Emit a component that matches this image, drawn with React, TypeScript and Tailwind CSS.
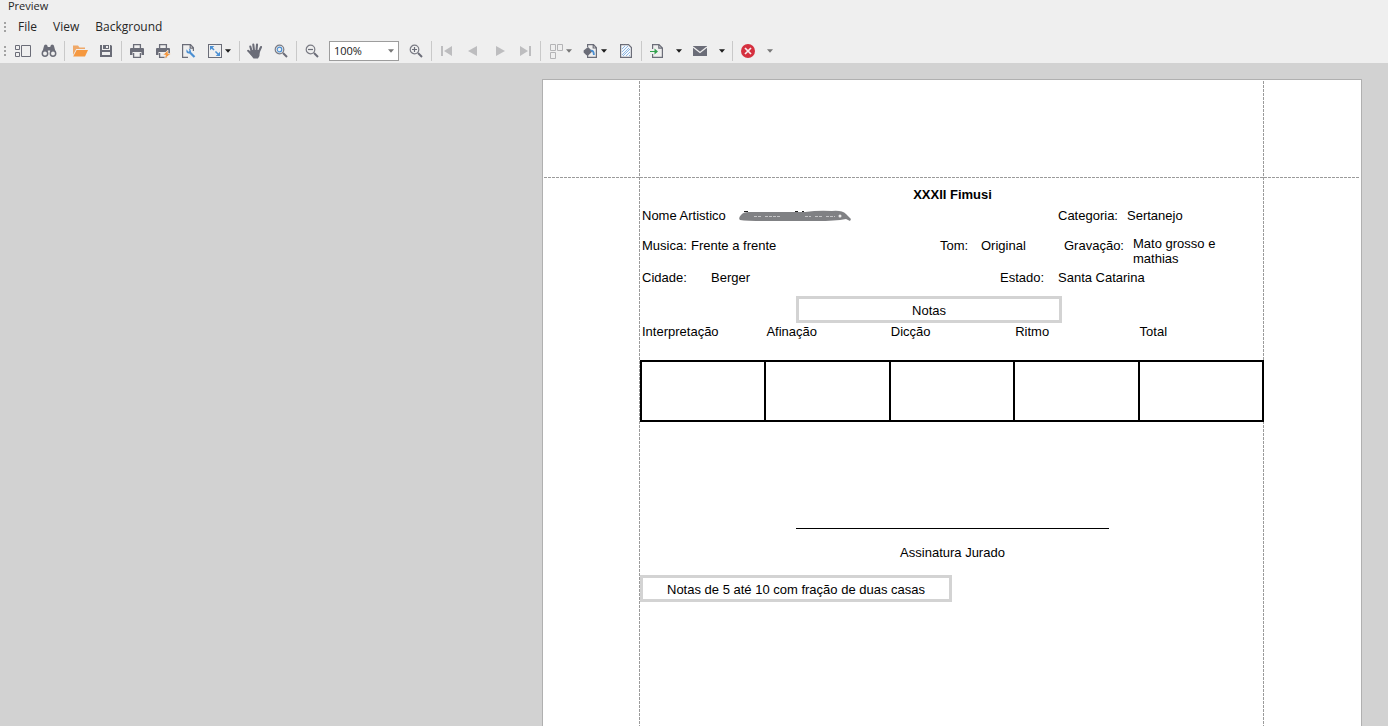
import type { ReactNode } from "react";

const GREY = "#6b6d78";
const BLUE = "#4a8fd3";
const ORANGE = "#f5983f";
const PALE = "#bdbdbf";

function Icon({ children }: { children: ReactNode }) {
  return (
    <svg width="16" height="16" viewBox="0 0 16 16" fill="none" aria-hidden="true" className="shrink-0">
      {children}
    </svg>
  );
}

function Arrow({ color = "#1c1c1c" }: { color?: string }) {
  return (
    <svg width="6" height="4" viewBox="0 0 6 4" aria-hidden="true" className="shrink-0">
      <path d="M0 0.3H6L3 3.7Z" fill={color} />
    </svg>
  );
}

function ToolButton({ label, children }: { label: string; children: ReactNode }) {
  return (
    <button type="button" aria-label={label} className="flex h-6 w-[26px] shrink-0 items-center justify-center">
      {children}
    </button>
  );
}

function MenuButton({ label, color, children }: { label: string; color?: string; children: ReactNode }) {
  return (
    <button type="button" aria-label={label} className="flex h-6 w-[35px] shrink-0 items-center gap-[2px] pl-[5px]">
      {children}
      <Arrow color={color} />
    </button>
  );
}

function ArrowButton({ label, color }: { label: string; color?: string }) {
  return (
    <button type="button" aria-label={label} className="flex h-6 w-[17px] shrink-0 items-center justify-center">
      <Arrow color={color} />
    </button>
  );
}

function Separator() {
  return <div className="mx-[2px] h-5 w-px shrink-0 bg-[#c9c9c9]" />;
}

function Grip() {
  return (
    <div className="flex w-[10px] shrink-0 flex-col gap-[2px] pl-1">
      <i className="size-[2px] bg-[#a3a3a3]" />
      <i className="size-[2px] bg-[#a3a3a3]" />
      <i className="size-[2px] bg-[#a3a3a3]" />
    </div>
  );
}

function Magnifier({ children }: { children?: ReactNode }) {
  return (
    <Icon>
      <circle cx="6.5" cy="6.5" r="4.3" stroke="#7a7b84" strokeWidth="1.2" />
      <path d="M10 10L14 14" stroke={GREY} strokeWidth="2" />
      {children}
    </Icon>
  );
}

function Printer() {
  return (
    <>
      <path d="M4.6 5V1.7H11.4V5" stroke={GREY} strokeWidth="1.3" />
      <path d="M1 6Q1 5 2 5H14Q15 5 15 6V12H12.5V9H3.5V12H1Z" fill={GREY} />
      <path d="M4.6 10V14.3H11.4V10" stroke={GREY} strokeWidth="1.3" />
    </>
  );
}

function Toolbar() {
  return (
    <div role="toolbar" aria-label="Preview tools" className="flex h-6 items-center overflow-hidden">
      <Grip />
      <ToolButton label="Thumbnails">
        <Icon>
          <path d="M0.5 2.5H4.5V6.5H0.5ZM0.5 9.5H4.5V13.5H0.5ZM6.5 2.5H15.5V13.5H6.5Z" stroke={GREY} />
        </Icon>
      </ToolButton>
      <ToolButton label="Search">
        <Icon>
          <path d="M3 3Q3 1.5 5 1.5Q6.5 1.5 6.8 4H9.2Q9.5 1.5 11 1.5Q13 1.5 13 3L14.6 9H9.2V7.5H6.8V9H1.4Z" fill={GREY} />
          <circle cx="4" cy="10.5" r="2.7" fill="#efefef" stroke={GREY} strokeWidth="1.5" />
          <circle cx="12" cy="10.5" r="2.7" fill="#efefef" stroke={GREY} strokeWidth="1.5" />
        </Icon>
      </ToolButton>
      <Separator />
      <ToolButton label="Open">
        <Icon>
          <path d="M1 12V2.5H6L7.5 4.5H13V6H4.2Z" fill="#efa868" />
          <path d="M4.6 7H16L13 13.5H1.2Z" fill={ORANGE} />
        </Icon>
      </ToolButton>
      <ToolButton label="Save">
        <Icon>
          <path fillRule="evenodd" d="M2 2H4V7H12V2H13L14 3V14H2ZM4 9V12H12V9Z" fill={GREY} />
          <path fillRule="evenodd" d="M5 2H11V6H5ZM8 3V5H10V3Z" fill={GREY} />
        </Icon>
      </ToolButton>
      <Separator />
      <ToolButton label="Print">
        <Icon>
          <Printer />
        </Icon>
      </ToolButton>
      <ToolButton label="Quick print">
        <Icon>
          <Printer />
          <path d="M13 7L7.8 12H10.5L9.5 16L16 10.6H13Z" fill={ORANGE} stroke="#efefef" strokeWidth="0.7" />
        </Icon>
      </ToolButton>
      <ToolButton label="Page setup">
        <Icon>
          <path d="M7 14.4H1.6V1.6H9.5L12.4 4.8V8M9.2 2V5.2H12" stroke={GREY} strokeWidth="1.2" />
          <path d="M8.5 9L13.5 14" stroke={BLUE} strokeWidth="2.2" />
          <path d="M5.6 6.2Q4.500 10.5 8.2 10.4L10 8.7Q10.2 6 7.8 5.6L8.5 7.9L7.3 8.8Z" fill={BLUE} />
        </Icon>
      </ToolButton>
      <MenuButton label="Scale">
        <Icon>
          <rect x="1.5" y="1.5" width="13" height="13" stroke={GREY} />
          <path d="M4.5 4.5L11.5 11.5" stroke={BLUE} strokeWidth="1.5" strokeDasharray="3.6 2" />
          <path d="M3 3H7.3L3 7.3ZM13 13H8.7L13 8.7Z" fill={BLUE} />
        </Icon>
      </MenuButton>
      <Separator />
      <ToolButton label="Hand tool">
        <Icon>
          <path
            d="M4.7 8.5L3.3 3.5M7 7.5L6.3 1.6M9.5 7.5L10 1.6M12 8.5L14 4M5 11.500L1.2 7.8"
            stroke={GREY}
            strokeWidth="2.1"
            strokeLinecap="round"
          />
          <path d="M3.8 7H12.9Q13.2 13 11 15.4H6.5L2.6 10.5Z" fill={GREY} />
        </Icon>
      </ToolButton>
      <ToolButton label="Magnifier">
        <Magnifier>
          <circle cx="6.5" cy="6.5" r="2.3" stroke={BLUE} strokeWidth="1.2" />
        </Magnifier>
      </ToolButton>
      <Separator />
      <ToolButton label="Zoom out">
        <Magnifier>
          <path d="M4 6.5H9" stroke={GREY} strokeWidth="1.2" />
        </Magnifier>
      </ToolButton>
      <div className="relative mx-1 shrink-0">
        <select
          aria-label="Zoom"
          defaultValue="100%"
          className="block h-5 w-[70px] appearance-none border border-[#9d9d9d] bg-white px-1 text-[11px] leading-4 text-[#1a1a1a]"
        >
          <option>50%</option>
          <option>100%</option>
          <option>200%</option>
        </select>
        <span className="pointer-events-none absolute inset-y-0 right-[5px] flex items-center">
          <Arrow color="#777777" />
        </span>
      </div>
      <ToolButton label="Zoom in">
        <Magnifier>
          <path d="M4 6.5H9M6.5 4V9" stroke={GREY} strokeWidth="1.2" />
        </Magnifier>
      </ToolButton>
      <Separator />
      <ToolButton label="First page">
        <Icon>
          <path d="M2 3H4V13H2ZM13 3V13L5 8Z" fill={PALE} />
        </Icon>
      </ToolButton>
      <ToolButton label="Previous page">
        <Icon>
          <path d="M12 3V13L3 8Z" fill={PALE} />
        </Icon>
      </ToolButton>
      <ToolButton label="Next page">
        <Icon>
          <path d="M5 3V13L14 8Z" fill={PALE} />
        </Icon>
      </ToolButton>
      <ToolButton label="Last page">
        <Icon>
          <path d="M12 3H14V13H12ZM3 3V13L11 8Z" fill={PALE} />
        </Icon>
      </ToolButton>
      <Separator />
      <MenuButton label="Multiple pages" color="#777777">
        <Icon>
          <path d="M2.5 1.5H7.5V7.5H2.5ZM9.5 1.5H14.5V7.500H9.5ZM2.5 9.5H7.5V15.5H2.5Z" stroke="#b4b4b6" />
        </Icon>
      </MenuButton>
      <MenuButton label="Page color">
        <Icon>
          <path d="M4.6 4V1.6H10.5L13.4 4.8V14.4H4.6V12M10.2 2V5H13" stroke={GREY} strokeWidth="1.2" />
          <path d="M5 4L9.4 8.2L5.5 12.3H3.4L0.6 9.5V7.5Z" fill={GREY} />
          <path d="M7 6.9Q11.8 6 11.8 12H10Q10 8.8 8.5 8.5Z" fill={BLUE} />
        </Icon>
      </MenuButton>
      <ToolButton label="Watermark">
        <Icon>
          <path d="M2.6 1.6H10.5L13.4 4.6V14.4H2.6Z" fill="#f4f7fb" stroke={GREY} strokeWidth="1.2" />
          <path
            d="M4 6L7 3M4 9L10 3M4 12L11 5M5 13L12 6M8 13L12 9M11 13L12 12"
            stroke="#8db8e4"
            strokeWidth="1"
          />
        </Icon>
      </ToolButton>
      <Separator />
      <ToolButton label="Export">
        <Icon>
          <path d="M3.6 6V1.6H10L13.4 5V14.4H3.6V11M9.8 2V5.2H13" stroke={GREY} strokeWidth="1.2" />
          <path d="M1 8H5.500V5.5L9 8.500L5.5 11.5V9H1Z" fill="#32a14d" />
        </Icon>
      </ToolButton>
      <ArrowButton label="Export options" />
      <ToolButton label="Send by e-mail">
        <Icon>
          <path d="M1 3H15V13H1Z" fill={GREY} />
          <path d="M1 4L8 9.4L15 4" stroke="#efefef" strokeWidth="1.3" />
        </Icon>
      </ToolButton>
      <ArrowButton label="E-mail options" />
      <Separator />
      <ToolButton label="Close">
        <Icon>
          <circle cx="8" cy="8" r="7" fill="#d5303f" />
          <path d="M5 5L11 11M11 5L5 11" stroke="#f7eff0" strokeWidth="1.7" />
        </Icon>
      </ToolButton>
      <ArrowButton label="More" color="#777777" />
    </div>
  );
}

function RedactedName() {
  return (
    <svg role="img" aria-label="Redacted" width="113" height="12" viewBox="0 0 113 12" className="shrink-0">
      <path d="M5 1.500H9M56 1.500H59M63 1.500H65" stroke="#222222" />
      <path
        d="M2 5Q4 2 10 2L66 2Q80 0 93 1Q103 0 107 4L112 9L111 11L107 9Q96 11 78 11L30 11Q8 11 1 10Q-1 8 2 5Z"
        fill="#808184"
      />
      <path d="M15 6.500H23M26 6.500H42M66 6.500H72M76 6.500H84M87 6.500H96" stroke="#c4c4c6" strokeDasharray="3 1" />
      <circle cx="101" cy="6" r="1.500" fill="#ececec" />
    </svg>
  );
}

const criteria = ["Interpretação", "Afinação", "Dicção", "Ritmo", "Total"];

const dashColumn =
  "row-span-3 row-start-1 mt-px bg-[repeating-linear-gradient(to_bottom,#9b9b9b_0_3px,transparent_3px_4px)]";

function ReportPage() {
  return (
    <article className="grid h-[1160px] w-[820px] shrink-0 grid-cols-[96px_1px_1fr_1px_97px] grid-rows-[97px_1px_1fr] border border-[#b0b0b0] bg-white text-[13px] leading-[15px] text-black">
      <div className={`${dashColumn} col-start-2`} />
      <div className={`${dashColumn} col-start-4`} />
      <div className="col-span-5 col-start-1 row-start-2 mx-px bg-[repeating-linear-gradient(to_right,#9b9b9b_0_3px,transparent_3px_4px)]" />

      <section className="col-start-3 row-start-3 pt-[9px]">
        <h1 className="pl-[2px] text-center font-bold">XXXII Fimusi</h1>

        <div className="mt-[6px] grid grid-cols-[97px_319px_69px_1fr] items-center pl-[2px]">
          <span>Nome Artistico</span>
          <RedactedName />
          <span>Categoria:</span>
          <span>Sertanejo</span>
        </div>

        <div className="mt-[13px] grid grid-cols-[49px_249px_41px_83px_69px_100px] pl-[2px]">
          <span className="pt-[2px]">Musica:</span>
          <span className="pt-[2px]">Frente a frente</span>
          <span className="pt-[2px]">Tom:</span>
          <span className="pt-[2px]">Original</span>
          <span className="pt-[2px]">Gravação:</span>
          <span>Mato grosso e mathias</span>
        </div>

        <div className="mt-1 grid grid-cols-[69px_289px_58px_1fr] pl-[2px]">
          <span>Cidade:</span>
          <span>Berger</span>
          <span>Estado:</span>
          <span>Santa Catarina</span>
        </div>

        <h2 className="mt-[11px] ml-39 w-[266px] border-3 border-[#d3d3d3] pt-1 pb-[2px] text-center">Notas</h2>

        <table className="-mr-px w-[624px] table-fixed border-collapse">
          <thead>
            <tr>
              {criteria.map((name) => (
                <th key={name} scope="col" className="h-[38px] p-0 pt-px pl-px text-left align-top font-normal">
                  {name}
                </th>
              ))}
            </tr>
          </thead>
          <tbody>
            <tr>
              {criteria.map((name) => (
                <td key={name} className="h-[60px] border-2 border-black" />
              ))}
            </tr>
          </tbody>
        </table>

        <div className="mt-[106px] ml-39 w-[313px] border-t border-black pt-4 text-center">Assinatura Jurado</div>

        <p className="mt-[15px] w-[312px] border-3 border-[#d3d3d3] pt-1 pb-[2px] text-center">
          Notas de 5 até 10 com fração de duas casas
        </p>
      </section>
    </article>
  );
}

export default function App() {
  return (
    <div className="flex h-screen flex-col overflow-hidden bg-[#d2d2d2] font-['Liberation_Sans',Arial,sans-serif]">
      <header className="shrink-0 bg-[#efefef] font-['Open_Sans','Noto_Sans',sans-serif] text-[#262626]">
        <div className="h-4 pl-2 text-[11px] leading-[12px]">Preview</div>
        <nav className="mb-[2px] flex h-[21px] items-center text-[12px]">
          <Grip />
          <button type="button" className="px-2">File</button>
          <button type="button" className="px-2">View</button>
          <button type="button" className="px-2">Background</button>
        </nav>
        <Toolbar />
      </header>
      <main className="flex min-h-0 flex-1 items-start justify-end overflow-hidden pt-4 pr-[26px]">
        <ReportPage />
      </main>
    </div>
  );
}
